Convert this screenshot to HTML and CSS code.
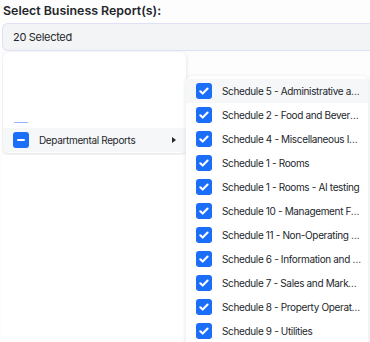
FILE: index.html
```html
<!DOCTYPE html>
<html lang="en">
<head>
    <meta charset="UTF-8">
    <meta name="viewport" content="width=device-width, initial-scale=1.0">
    <title>Business Reports</title>
    <link rel="stylesheet" href="styles.css">
</head>
<body>
    <div class="report-field">
        <label class="field-label">Select Business Report(s):</label>
        <div class="select-box">20 Selected</div>

        <div class="menus">
            <div class="left-col">
                <div class="menu main-menu">
                    <div class="scroll-gap">
                        <span class="peek"></span>
                    </div>
                    <div class="menu-item active">
                        <span class="check partial"><span class="dash"></span></span>
                        <span class="item-text">Departmental Reports</span>
                        <span class="caret"></span>
                    </div>
                </div>
                <div class="backdrop"></div>
            </div>

            <div class="menu sub-menu">
                <div class="menu-item active"><span class="check"></span><span class="item-text">Schedule 5 - Administrative and General</span></div>
                <div class="menu-item"><span class="check"></span><span class="item-text">Schedule 2 - Food and Beverage</span></div>
                <div class="menu-item"><span class="check"></span><span class="item-text">Schedule 4 - Miscellaneous Income</span></div>
                <div class="menu-item"><span class="check"></span><span class="item-text">Schedule 1 - Rooms</span></div>
                <div class="menu-item"><span class="check"></span><span class="item-text">Schedule 1 - Rooms - AI testing</span></div>
                <div class="menu-item"><span class="check"></span><span class="item-text">Schedule 10 - Management Fees</span></div>
                <div class="menu-item"><span class="check"></span><span class="item-text">Schedule 11 - Non-Operating Income</span></div>
                <div class="menu-item"><span class="check"></span><span class="item-text">Schedule 6 - Information and Telecommunications</span></div>
                <div class="menu-item"><span class="check"></span><span class="item-text">Schedule 7 - Sales and Marketing</span></div>
                <div class="menu-item"><span class="check"></span><span class="item-text">Schedule 8 - Property Operation and Maintenance</span></div>
                <div class="menu-item"><span class="check"></span><span class="item-text">Schedule 9 - Utilities</span></div>
            </div>
        </div>
    </div>
</body>
</html>
```

FILE: styles.css
```css
body {
    margin: 0;
    width: 370px;
    height: 342px;
    overflow: hidden;
    background: #f6f7f9;
    font-family: Inter, "Noto Sans", sans-serif;
    color: #23262b;
}
.report-field {
    background: #fdfdfe;
    padding: 3px 0 0 2px;
}
.field-label {
    display: block;
    font-size: 12.4px;
    font-weight: 600;
    line-height: 16px;
    padding-left: 1px;
    margin-bottom: 4px;
}
.select-box {
    height: 26px;
    padding-left: 10px;
    line-height: 26px;
    font-size: 11px;
    letter-spacing: -0.3px;
    background: #f3f4f6;
    border: 1px solid #dfe0f5;
    border-right: none;
    border-radius: 6px 0 0 6px;
}
.menus {
    display: flex;
    align-items: flex-start;
    height: 291px;
    overflow: hidden;
}
.left-col {
    width: 184px;
    display: flex;
    flex-direction: column;
}
.menu {
    background: #fff;
    border-radius: 6px;
    box-shadow: 0 1px 4px rgba(30, 40, 60, 0.14);
}
.main-menu {
    margin: 1px 0 0 1px;
    height: 101px;
    display: flex;
    flex-direction: column;
    justify-content: flex-end;
    padding-bottom: 1px;
    box-sizing: border-box;
}
.scroll-gap {
    flex: 1;
    position: relative;
}
.peek {
    position: absolute;
    left: 11px;
    bottom: 5px;
    width: 14px;
    height: 1px;
    background: #8fb5fb;
}
.backdrop {
    height: 181px;
    margin-top: 2px;
    background: #fff;
}
.sub-menu {
    margin-top: 25px;
    width: 182px;
    height: 270px;
    padding-top: 3px;
    box-sizing: border-box;
    overflow: hidden;
}
.menu-item {
    display: flex;
    align-items: center;
    height: 24px;
    padding-left: 10px;
    gap: 10px;
    font-size: 10px;
    letter-spacing: -0.35px;
    white-space: nowrap;
}
.main-menu .menu-item {
    padding-right: 10px;
    gap: 10px;
}
.menu-item.active {
    background: #f6f7f9;
}
.item-text {
    overflow: hidden;
    text-overflow: ellipsis;
    flex: 1;
    min-width: 0;
    padding-right: 6px;
}
.check {
    flex: none;
    width: 16px;
    height: 16px;
    border-radius: 3px;
    background: #1a6ef7 url("data:image/svg+xml;charset=utf-8,%3Csvg xmlns='http://www.w3.org/2000/svg' width='16' height='16' viewBox='0 0 16 16'%3E%3Cpath d='M4.3 8.3l2.4 2.3 4.9-5' fill='none' stroke='white' stroke-width='2.1' stroke-linecap='round' stroke-linejoin='round'/%3E%3C/svg%3E") no-repeat center;
}
.check.partial {
    background-image: none;
    display: flex;
    align-items: center;
    justify-content: center;
}
.dash {
    width: 8px;
    height: 2px;
    background: #fff;
    border-radius: 1px;
}
.caret {
    width: 0;
    height: 0;
    border-top: 3.5px solid transparent;
    border-bottom: 3.5px solid transparent;
    border-left: 4px solid #23262b;
}
```
